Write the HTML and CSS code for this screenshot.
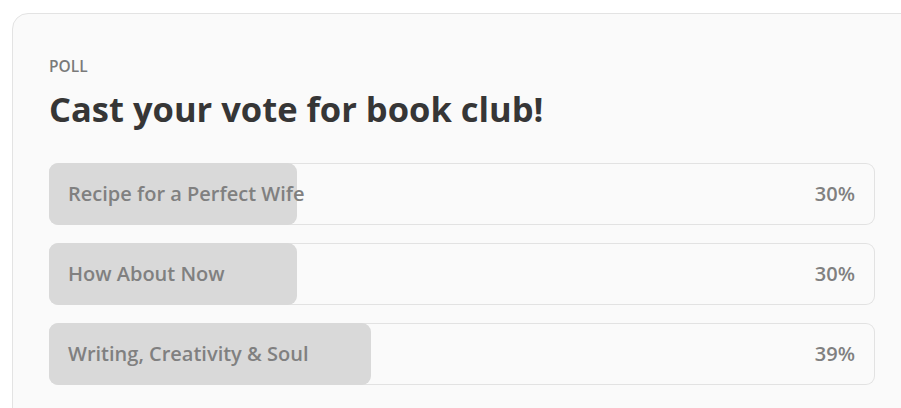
FILE: index.html
```html
<!DOCTYPE html>
<html>
<head>
<meta charset="utf-8">
<link rel="stylesheet" href="styles.css">
</head>
<body>
<div class="card">
  <div class="label">POLL</div>
  <h1 class="title">Cast your vote for book club!</h1>
  <div class="options">
    <div class="option">
      <div class="fill" style="width:30%"></div>
      <span class="name">Recipe for a Perfect Wife</span>
      <span class="pct">30%</span>
    </div>
    <div class="option">
      <div class="fill" style="width:30%"></div>
      <span class="name">How About Now</span>
      <span class="pct">30%</span>
    </div>
    <div class="option">
      <div class="fill" style="width:39%"></div>
      <span class="name">Writing, Creativity &amp; Soul</span>
      <span class="pct">39%</span>
    </div>
  </div>
</div>
</body>
</html>
```
FILE: styles.css
```css
html, body {
  margin: 0;
  padding: 0;
  background: #ffffff;
  font-family: "Open Sans", "Noto Sans", sans-serif;
}
body {
  padding: 13px 0 0 12px;
  overflow: hidden;
  height: 408px;
  box-sizing: border-box;
}
.card {
  background: #fafafa;
  border: 1px solid #e3e3e3;
  border-radius: 16px;
  padding: 42px 60px 40px 36px;
  width: 826px;
}
.label {
  font-size: 15.5px;
  font-weight: 600;
  color: #7a7a7a;
  line-height: 20px;
}
.title {
  margin: 11px 0 0 0;
  font-size: 34.5px;
  font-weight: 700;
  color: #363636;
  line-height: 44px;
}
.options {
  margin-top: 32px;
  display: flex;
  flex-direction: column;
  gap: 18px;
}
.option {
  position: relative;
  height: 62px;
  box-sizing: border-box;
  box-shadow: inset 0 0 0 1px #e2e2e2;
  border-radius: 9px;
  display: flex;
  align-items: center;
  justify-content: space-between;
  padding: 0 20px 2px 19px;
  color: #808080;
  font-size: 20px;
  font-weight: 600;
  background: #fafafa;
}
.fill {
  position: absolute;
  left: 0;
  top: 0;
  bottom: 0;
  background: #d9d9d9;
  border-radius: 9px;
}
.name, .pct {
  position: relative;
}
```
